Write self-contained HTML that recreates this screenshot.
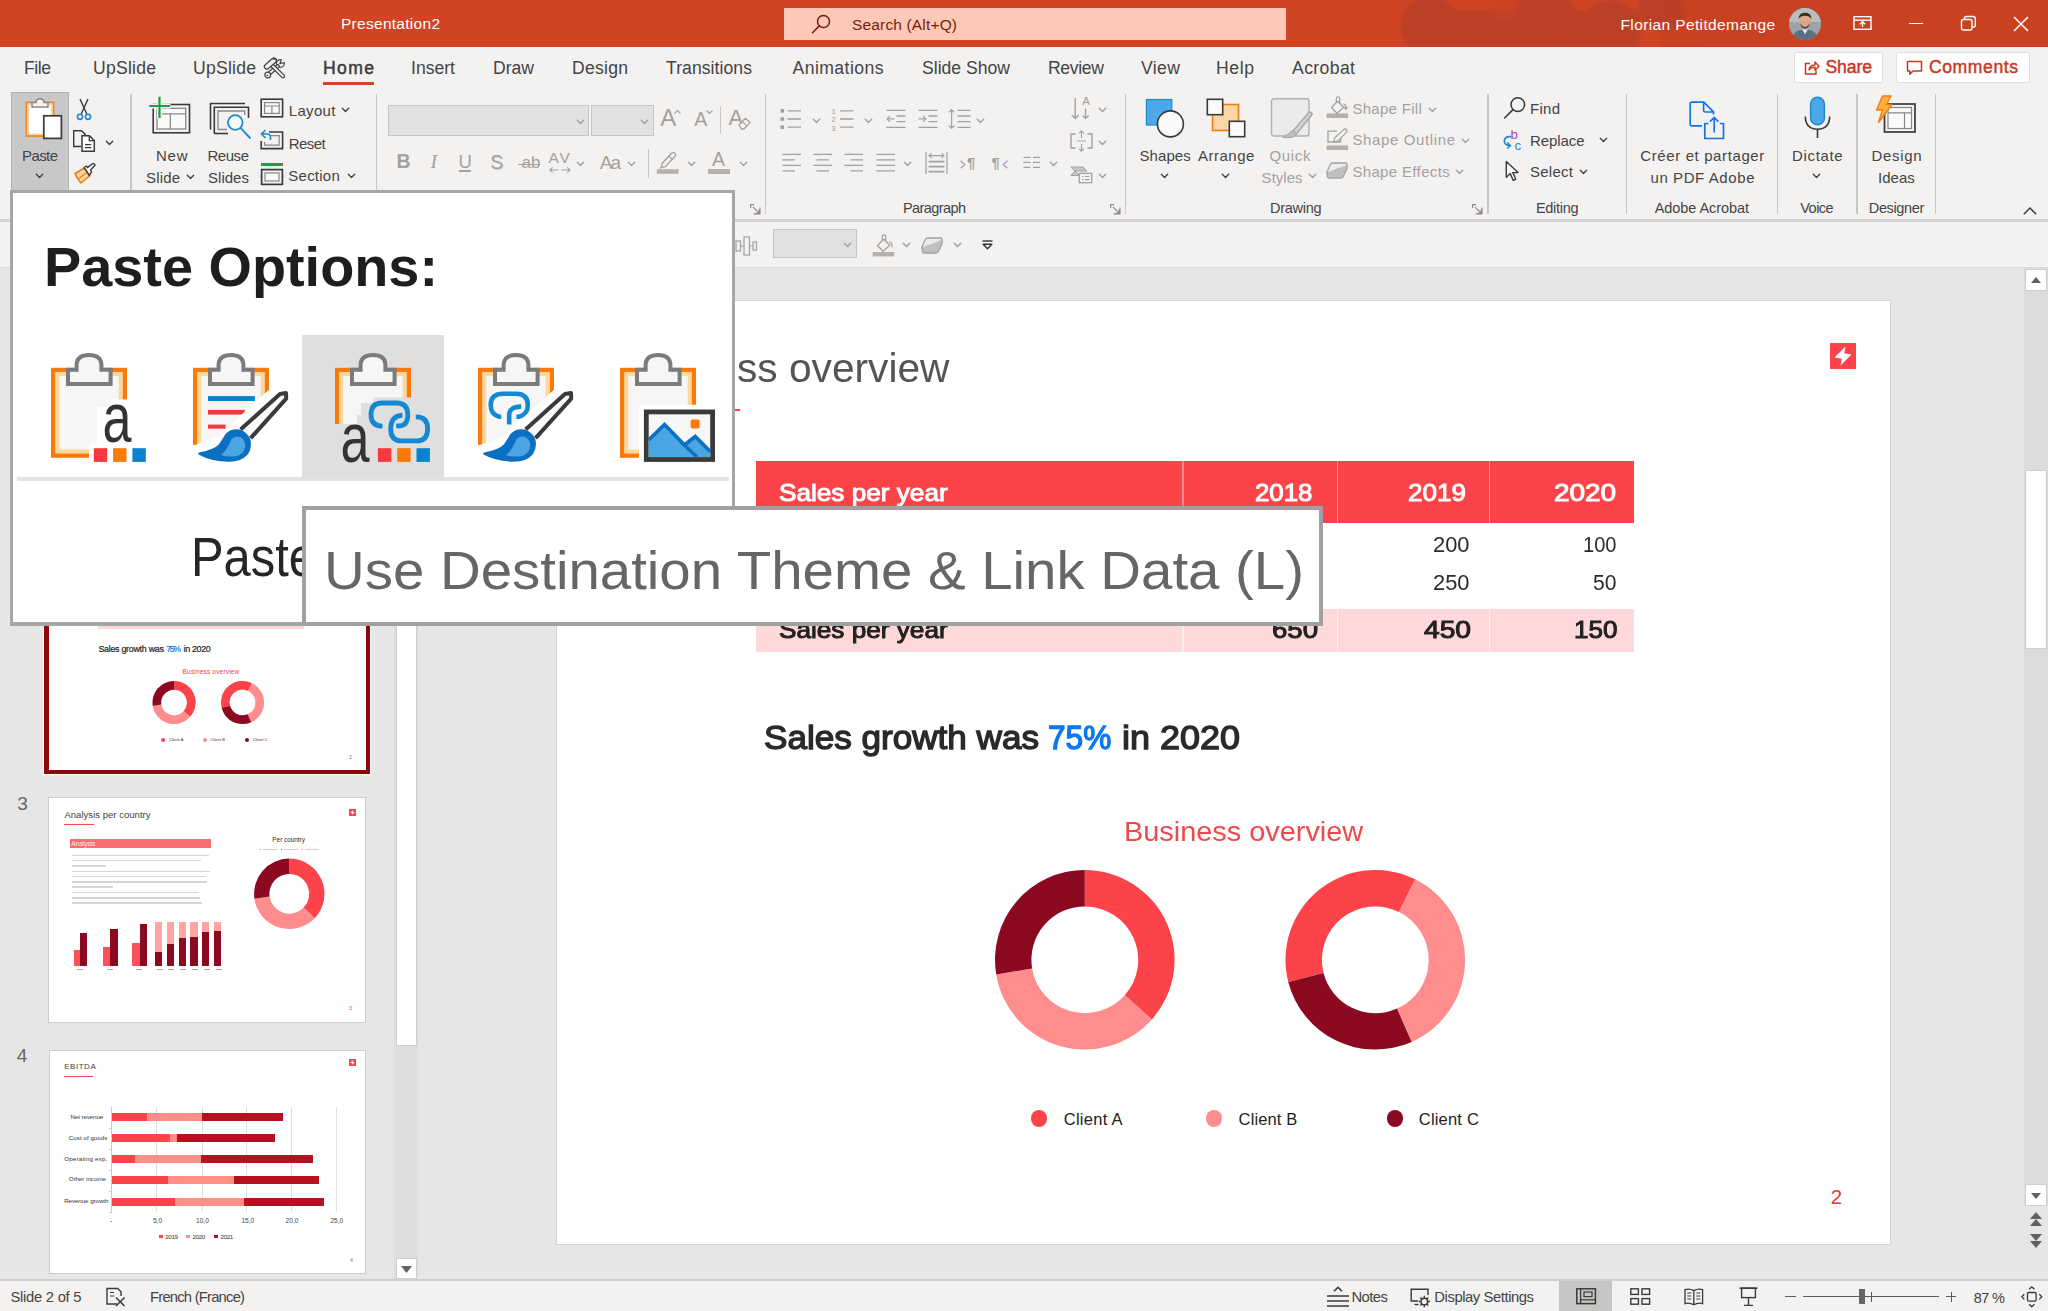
<!DOCTYPE html>
<html lang="en"><head><meta charset="utf-8"><title>PowerPoint - Paste Options</title>
<style>
html,body{margin:0;padding:0;}
body{width:2048px;height:1311px;overflow:hidden;background:#e6e6e6;position:relative;font-family:"Liberation Sans",sans-serif;}
body>div,body>svg,body>span{position:absolute;display:block;}
.t{white-space:nowrap;line-height:1;}
svg{overflow:visible;}
</style></head>
<body>
<div style="left:0px;top:0px;width:2048px;height:47px;background:#d14524;"></div>
<svg style="left:1290px;top:0px;" width="758" height="47" viewBox="0 0 758 47"><defs><clipPath id="tbc"><rect x="0" y="0" width="758" height="47"/></clipPath></defs><filter id="tbb"><feGaussianBlur stdDeviation="1.6"/></filter><g clip-path="url(#tbc)"><g filter="url(#tbb)"><rect x="370" y="0" width="388" height="47" fill="#c6401f" opacity=".75"/><g fill="#b84026" opacity=".8"><circle cx="140" cy="26" r="30"/><circle cx="188" cy="34" r="22"/><circle cx="255" cy="22" r="34"/><circle cx="320" cy="30" r="30"/><circle cx="372" cy="8" r="24"/><rect x="150" y="10" width="200" height="37"/></g><g fill="#c9431f" opacity=".5"><circle cx="215" cy="6" r="14"/><circle cx="395" cy="40" r="16"/></g></g></g></svg>
<div style="left:784px;top:8px;width:502px;height:32px;background:#fdc9b6;"></div>
<div style="left:0px;top:47px;width:2048px;height:173px;background:#f3f2f1;"></div>
<div style="left:0px;top:219px;width:2048px;height:3px;background:#d6d4d2;"></div>
<div style="left:0px;top:222px;width:2048px;height:45px;background:#f3f2f1;"></div>
<div style="left:0px;top:267px;width:2048px;height:1px;background:#dcdad8;"></div>
<div style="left:0px;top:268px;width:2048px;height:1012px;background:#e6e6e6;"></div>
<div style="left:557px;top:301px;width:1333px;height:943px;background:#ffffff;box-shadow:0 0 0 1px #d4d4d4;"></div>
<div style="left:2024px;top:268px;width:24px;height:1012px;background:#dcdcdc;"></div>
<div style="left:2025px;top:269px;width:22px;height:22px;background:#ffffff;box-shadow:0 0 0 1px #cfcfcf inset;"></div>
<div style="left:2025px;top:470px;width:22px;height:179px;background:#ffffff;box-shadow:0 0 0 1px #cfcfcf inset;"></div>
<div style="left:2025px;top:1184px;width:22px;height:22px;background:#ffffff;box-shadow:0 0 0 1px #cfcfcf inset;"></div>
<div style="left:2024px;top:1206px;width:24px;height:74px;background:#e6e6e6;"></div>
<svg style="left:2025px;top:269px;" width="22" height="22" viewBox="0 0 22 22"><path d="M6 14 L11 8 L16 14Z" fill="#606060"/></svg>
<svg style="left:2025px;top:1184px;" width="22" height="22" viewBox="0 0 22 22"><path d="M6 9 L11 15 L16 9Z" fill="#606060"/></svg>
<svg style="left:2025px;top:1210px;" width="22" height="40" viewBox="0 0 22 40"><g fill="#606060"><path d="M5 9 L11 2 L17 9Z"/><path d="M5 16 L11 9 L17 16Z"/><path d="M5 24 L11 31 L17 24Z"/><path d="M5 31 L11 38 L17 31Z"/></g></svg>
<div style="left:394px;top:268px;width:24px;height:1012px;background:#dedede;"></div>
<div style="left:396px;top:268px;width:21px;height:778px;background:#ffffff;box-shadow:0 0 0 1px #cfcfcf inset;"></div>
<div style="left:396px;top:1258.2px;width:21px;height:21px;background:#ffffff;box-shadow:0 0 0 1px #cfcfcf inset;"></div>
<svg style="left:396px;top:1258.7px;" width="21" height="20" viewBox="0 0 21 20"><path d="M5 7 L10.5 14 L16 7Z" fill="#606060"/></svg>
<div style="left:0px;top:1279px;width:2048px;height:2px;background:#d2d0ce;"></div>
<div style="left:0px;top:1281px;width:2048px;height:30px;background:#f3f2f1;"></div>
<span class="t" style="left:341.00px;top:15.58px;font-size:15.5px;color:#ffffff;letter-spacing:0.279px;">Presentation2</span>
<svg style="left:810px;top:13px;" width="22" height="22" viewBox="0 0 22 22"><circle cx="13.5" cy="8.5" r="6" fill="none" stroke="#7a1a0c" stroke-width="1.5"/><path d="M9.3 12.8 L2.5 19.8" stroke="#7a1a0c" stroke-width="1.6" stroke-linecap="round"/></svg>
<span class="t" style="left:852.00px;top:16.98px;font-size:15.5px;color:#7a1a0c;letter-spacing:0.159px;">Search (Alt+Q)</span>
<span class="t" style="left:1620.50px;top:17.38px;font-size:15.5px;color:#ffffff;letter-spacing:0.377px;">Florian Petitdemange</span>
<svg style="left:1789px;top:8px;" width="32" height="32" viewBox="0 0 32 32"><defs><clipPath id="av"><circle cx="16" cy="16" r="16"/></clipPath></defs><g clip-path="url(#av)"><rect width="32" height="32" fill="#9aa3a8"/><rect x="0" y="0" width="32" height="14" fill="#b9bdbf"/><ellipse cx="16" cy="13" rx="6" ry="7" fill="#d9a98a"/><path d="M9.5 11 Q10 4.5 16 4.8 Q22 4.5 22.5 11 Q20 7.5 16 7.8 Q12 7.5 9.5 11Z" fill="#3a2a22"/><path d="M11 15 Q16 23 21 15 Q20 20 16 20.5 Q12 20 11 15Z" fill="#4a352b"/><path d="M3 32 Q4 21.5 16 21.5 Q28 21.5 29 32Z" fill="#5b6f86"/><path d="M13 21.5 L16 26 L19 21.5Z" fill="#e9e9ee"/></g></svg>
<svg style="left:1853px;top:15px;" width="20" height="17" viewBox="0 0 20 17"><rect x="1" y="1.7" width="17" height="12.6" fill="none" stroke="#fff" stroke-width="1.4"/><path d="M1 5.2 H18" stroke="#fff" stroke-width="1.4"/><path d="M9.5 12 V7 M6.8 9.2 L9.5 6.6 L12.2 9.2" fill="none" stroke="#fff" stroke-width="1.3"/></svg>
<div style="left:1909px;top:22.5px;width:14px;height:1.5px;background:#ffffff;"></div>
<svg style="left:1960px;top:15px;" width="18" height="17" viewBox="0 0 18 17"><rect x="1.5" y="4.5" width="10.5" height="10.5" rx="2" fill="none" stroke="#fff" stroke-width="1.4"/><path d="M4.5 4.2 V3.5 Q4.5 1.5 6.5 1.5 H13 Q15.3 1.5 15.3 3.8 V10 Q15.3 12 13.5 12 H12.4" fill="none" stroke="#fff" stroke-width="1.4"/></svg>
<svg style="left:2013px;top:16px;" width="16" height="16" viewBox="0 0 16 16"><path d="M1 1 L15 15 M15 1 L1 15" stroke="#fff" stroke-width="1.5"/></svg>
<span class="t" style="left:24.00px;top:60.40px;font-size:17.6px;color:#444444;letter-spacing:-0.453px;">File</span>
<span class="t" style="left:93.00px;top:60.40px;font-size:17.6px;color:#444444;letter-spacing:0.229px;">UpSlide</span>
<span class="t" style="left:193.00px;top:60.40px;font-size:17.6px;color:#444444;letter-spacing:0.229px;">UpSlide</span>
<span class="t" style="left:411.00px;top:60.40px;font-size:17.6px;color:#444444;">Insert</span>
<span class="t" style="left:493.00px;top:60.40px;font-size:17.6px;color:#444444;letter-spacing:-0.021px;">Draw</span>
<span class="t" style="left:572.00px;top:60.40px;font-size:17.6px;color:#444444;letter-spacing:0.244px;">Design</span>
<span class="t" style="left:666.00px;top:60.40px;font-size:17.6px;color:#444444;letter-spacing:0.059px;">Transitions</span>
<span class="t" style="left:792.50px;top:60.40px;font-size:17.6px;color:#444444;letter-spacing:0.439px;">Animations</span>
<span class="t" style="left:922.00px;top:60.40px;font-size:17.6px;color:#444444;">Slide Show</span>
<span class="t" style="left:1048.00px;top:60.40px;font-size:17.6px;color:#444444;letter-spacing:-0.338px;">Review</span>
<span class="t" style="left:1141.00px;top:60.40px;font-size:17.6px;color:#444444;letter-spacing:0.391px;">View</span>
<span class="t" style="left:1216.00px;top:60.40px;font-size:17.6px;color:#444444;letter-spacing:0.604px;">Help</span>
<span class="t" style="left:1292.00px;top:60.40px;font-size:17.6px;color:#444444;letter-spacing:0.393px;">Acrobat</span>
<span class="t" style="left:323.00px;top:60.40px;font-size:17.6px;color:#3b3a39;letter-spacing:1.354px;-webkit-text-stroke:0.45px #3b3a39;">Home</span>
<div style="left:323px;top:81.5px;width:51px;height:3.5px;background:#d14524;"></div>
<svg style="left:264px;top:58px;" width="22" height="21" viewBox="0 0 22 21"><circle cx="16.4" cy="5.4" r="3.9" fill="#f3f2f1" stroke="#444" stroke-width="1.25"/><path d="M16.6 5.2 L21 0.6" stroke="#f3f2f1" stroke-width="3.2"/><path d="M17.3 2 L15.9 5.8 L19.8 4.6" fill="none" stroke="#444" stroke-width="1.2" stroke-linejoin="round"/><path d="M13.6 8.4 L3.9 16.6" stroke="#444" stroke-width="4.4" stroke-linecap="round"/><path d="M13.6 8.4 L3.9 16.6" stroke="#f3f2f1" stroke-width="1.9000000000000004" stroke-linecap="round"/><circle cx="3.7" cy="17" r="2.9" fill="#f3f2f1" stroke="#444" stroke-width="1.25"/><circle cx="3.3" cy="17.4" r="0.8" fill="#444"/><path d="M8.2 7.6 L19 18.2" stroke="#444" stroke-width="4.4" stroke-linecap="round"/><path d="M8.2 7.6 L19 18.2" stroke="#f3f2f1" stroke-width="1.9000000000000004" stroke-linecap="round"/><path d="M2.8 8.6 L9.8 2.6" stroke="#444" stroke-width="6.2" stroke-linecap="round"/><path d="M2.8 8.6 L9.8 2.6" stroke="#f3f2f1" stroke-width="3.7" stroke-linecap="round"/><path d="M9 1.6 Q11.5 0.2 13 1.8" fill="none" stroke="#444" stroke-width="1.2"/></svg>
<div style="left:1794px;top:52px;width:89px;height:31px;background:#ffffff;box-shadow:0 0 0 1px #e1dfdd inset;border-radius:2px;"></div>
<div style="left:1896px;top:52px;width:134px;height:31px;background:#ffffff;box-shadow:0 0 0 1px #e1dfdd inset;border-radius:2px;"></div>
<svg style="left:1803px;top:59px;" width="17" height="17" viewBox="0 0 17 17"><path d="M7 4.5 H2.5 V15 H13 V11.5" fill="none" stroke="#c8391f" stroke-width="1.5"/><path d="M6 11 Q6.5 6 12 6 V3 L16 7.2 L12 11.2 V8.3 Q8 8 6 11Z" fill="none" stroke="#c8391f" stroke-width="1.4" stroke-linejoin="round"/></svg>
<span class="t" style="left:1825.50px;top:59.30px;font-size:17.6px;color:#c8391f;letter-spacing:-0.113px;-webkit-text-stroke:0.45px #c8391f;">Share</span>
<svg style="left:1906px;top:60px;" width="17" height="16" viewBox="0 0 17 16"><path d="M1.5 1.5 H15.5 V11 H7 L3.8 14.2 V11 H1.5Z" fill="none" stroke="#c8391f" stroke-width="1.5" stroke-linejoin="round"/></svg>
<span class="t" style="left:1929.00px;top:59.30px;font-size:17.6px;color:#c8391f;letter-spacing:0.562px;-webkit-text-stroke:0.45px #c8391f;">Comments</span>
<div style="left:130.3px;top:93.5px;width:1.3px;height:120.5px;background:#c8c6c4;"></div>
<div style="left:375.6px;top:93.5px;width:1.3px;height:120.5px;background:#c8c6c4;"></div>
<div style="left:764.6px;top:93.5px;width:1.3px;height:120.5px;background:#c8c6c4;"></div>
<div style="left:1124.8px;top:93.5px;width:1.3px;height:120.5px;background:#c8c6c4;"></div>
<div style="left:1487.3px;top:93.5px;width:1.3px;height:120.5px;background:#c8c6c4;"></div>
<div style="left:1625.7px;top:93.5px;width:1.3px;height:120.5px;background:#c8c6c4;"></div>
<div style="left:1777px;top:93.5px;width:1.3px;height:120.5px;background:#c8c6c4;"></div>
<div style="left:1856.3px;top:93.5px;width:1.3px;height:120.5px;background:#c8c6c4;"></div>
<div style="left:1935px;top:93.5px;width:1.3px;height:120.5px;background:#c8c6c4;"></div>
<div style="left:11px;top:92px;width:58px;height:100px;background:#c8c8c8;box-shadow:0 0 0 1px #b4b2b0 inset;"></div>
<svg style="left:24px;top:96px;" width="40" height="45" viewBox="0 0 40 45"><rect x="2.5" y="6.5" width="27" height="33.5" fill="#fdfdfd" stroke="#f08a24" stroke-width="2"/><rect x="4.3" y="8.3" width="23.4" height="30" fill="none" stroke="#fbd6a3" stroke-width="1.6"/><path d="M8 11 V6.5 H12 Q12.3 2.7 16 2.7 Q19.7 2.7 20 6.5 H24 V11Z" fill="#f3f2f1" stroke="#8a8886" stroke-width="1.5"/><rect x="19.8" y="19.8" width="17.6" height="22.6" fill="#fdfdfd" stroke="#3b3a39" stroke-width="1.7"/></svg>
<span class="t" style="left:22.00px;top:147.70px;font-size:15px;color:#444444;letter-spacing:-0.590px;">Paste</span>
<svg style="left:36px;top:174.3px;" width="7" height="4" viewBox="0 0 7 4"><path d="M0.3 0.3 L3.5 3.6 L6.7 0.3" fill="none" stroke="#444444" stroke-width="1.4" stroke-linecap="round" stroke-linejoin="round"/></svg>
<svg style="left:76px;top:97px;" width="16" height="24" viewBox="0 0 16 24"><path d="M4 2 L10.8 17 M12 2 L5.2 17" stroke="#3b3a39" stroke-width="1.4" fill="none"/><circle cx="4" cy="19.8" r="2.6" fill="none" stroke="#1e8bcd" stroke-width="1.6"/><circle cx="12" cy="19.8" r="2.6" fill="none" stroke="#1e8bcd" stroke-width="1.6"/></svg>
<svg style="left:72px;top:129px;" width="24" height="24" viewBox="0 0 24 24"><path d="M9 17.5 H1.7 V1.7 H9.5 L13.2 5.4 V6" fill="none" stroke="#3b3a39" stroke-width="1.4"/><path d="M10 6.7 H17.5 L22.3 11.5 V22.3 H10Z" fill="#fdfdfd" stroke="#3b3a39" stroke-width="1.5"/><path d="M17.3 6.9 V11.7 H22" fill="none" stroke="#3b3a39" stroke-width="1.3"/><path d="M13 15.7 H19.3 M13 18.7 H19.3" stroke="#3b3a39" stroke-width="1.3"/></svg>
<svg style="left:105.5px;top:140.5px;" width="7" height="4" viewBox="0 0 7 4"><path d="M0.3 0.3 L3.5 3.6 L6.7 0.3" fill="none" stroke="#444444" stroke-width="1.4" stroke-linecap="round" stroke-linejoin="round"/></svg>
<svg style="left:73px;top:162px;" width="24" height="22" viewBox="0 0 24 22"><path d="M2 11.5 L11.5 6 L16.5 14 L8 21 Q4 17 2 11.5Z" fill="#fbd6a3" stroke="#f07d13" stroke-width="1.6" stroke-linejoin="round"/><path d="M6 16.5 L13 11" stroke="#f07d13" stroke-width="1.2"/><path d="M11 5.5 L13.5 4 L14.5 5.6 L19.5 1.8 Q21.5 1.2 22 3.2 L17.5 8 L18.5 9.7 L16.5 13.5Z" fill="#fdfdfd" stroke="#3b3a39" stroke-width="1.4" stroke-linejoin="round"/></svg>
<svg style="left:148px;top:95px;" width="44" height="40" viewBox="0 0 44 40"><rect x="5.2" y="9.5" width="36.3" height="28.3" fill="none" stroke="#3b3a39" stroke-width="1.6"/><rect x="9" y="13.3" width="28.7" height="20.7" fill="#fafafa" stroke="#8a8886" stroke-width="1.3"/><path d="M9 18.8 H37.7 M22.3 18.8 V34" stroke="#8a8886" stroke-width="1.3"/><path d="M11.5 1.5 V23.5 M1 11 H22.5" stroke="#f3f2f1" stroke-width="5"/><path d="M11.5 1.7 V23 M1.2 11 H22.2" stroke="#1e9e4a" stroke-width="2.2"/></svg>
<span class="t" style="left:156.00px;top:147.70px;font-size:15px;color:#444444;letter-spacing:0.742px;">New</span>
<span class="t" style="left:146.00px;top:169.50px;font-size:15px;color:#444444;letter-spacing:0.160px;">Slide</span>
<svg style="left:187px;top:174.5px;" width="7" height="4" viewBox="0 0 7 4"><path d="M0.3 0.3 L3.5 3.6 L6.7 0.3" fill="none" stroke="#444444" stroke-width="1.4" stroke-linecap="round" stroke-linejoin="round"/></svg>
<svg style="left:209px;top:102px;" width="43" height="40" viewBox="0 0 43 40"><path d="M1.5 27.5 V1.5 H36" fill="none" stroke="#3b3a39" stroke-width="1.6"/><path d="M5.3 31.5 V5.3 H39.5 V16" fill="none" stroke="#3b3a39" stroke-width="1.6"/><path d="M5.3 31.5 H19" fill="none" stroke="#3b3a39" stroke-width="1.6"/><path d="M9 27.5 V9 H35.7 V13 M9 27.5 H18" fill="none" stroke="#8a8886" stroke-width="1.3"/><circle cx="26.3" cy="20.5" r="7.3" fill="#fafafa" stroke="#1e8bcd" stroke-width="1.8"/><path d="M31.6 25.8 L41.5 36.5" stroke="#1e8bcd" stroke-width="1.9"/></svg>
<span class="t" style="left:207.50px;top:147.70px;font-size:15px;color:#444444;letter-spacing:-0.465px;">Reuse</span>
<span class="t" style="left:208.00px;top:169.50px;font-size:15px;color:#444444;letter-spacing:0.028px;">Slides</span>
<svg style="left:260px;top:97.5px;" width="24" height="20" viewBox="0 0 24 20"><rect x="1.2" y="1.2" width="21.4" height="17.6" fill="none" stroke="#3b3a39" stroke-width="1.6"/><rect x="4.6" y="4.6" width="14.6" height="10.8" fill="#fafafa" stroke="#8a8886" stroke-width="1.2"/><path d="M4.6 8 H19.2 M11.9 8 V15.4" stroke="#8a8886" stroke-width="1.2"/></svg>
<span class="t" style="left:288.70px;top:102.80px;font-size:15px;color:#444444;letter-spacing:0.351px;">Layout</span>
<svg style="left:341.8px;top:108.3px;" width="7" height="4" viewBox="0 0 7 4"><path d="M0.3 0.3 L3.5 3.6 L6.7 0.3" fill="none" stroke="#444444" stroke-width="1.4" stroke-linecap="round" stroke-linejoin="round"/></svg>
<svg style="left:260px;top:129px;" width="24" height="21" viewBox="0 0 24 21"><path d="M9 3 H22.6 V19.6 H1.2 V12" fill="none" stroke="#3b3a39" stroke-width="1.6"/><path d="M11 6.6 H19.2 V16.2 H4.6 V13" fill="none" stroke="#8a8886" stroke-width="1.2"/><path d="M5.5 1 L1.5 5 L5.5 9 M1.8 5 H7 Q10.5 5 10.5 8.5 V11" fill="none" stroke="#1e8bcd" stroke-width="1.7"/></svg>
<span class="t" style="left:288.70px;top:135.50px;font-size:15px;color:#444444;letter-spacing:-0.547px;">Reset</span>
<svg style="left:260px;top:162px;" width="24" height="24" viewBox="0 0 24 24"><rect x="1" y="1" width="22" height="3" fill="#1e9e4a"/><rect x="1.6" y="7.6" width="20.8" height="14.8" fill="none" stroke="#3b3a39" stroke-width="1.7"/><rect x="5" y="11" width="14" height="8" fill="#fafafa" stroke="#8a8886" stroke-width="1.2"/></svg>
<span class="t" style="left:288.30px;top:168.30px;font-size:15px;color:#444444;letter-spacing:0.242px;">Section</span>
<svg style="left:348px;top:174px;" width="7" height="4" viewBox="0 0 7 4"><path d="M0.3 0.3 L3.5 3.6 L6.7 0.3" fill="none" stroke="#444444" stroke-width="1.4" stroke-linecap="round" stroke-linejoin="round"/></svg>
<div style="left:388px;top:105px;width:200.5px;height:31px;background:#e3e1df;box-shadow:0 0 0 1px #c8c6c4 inset;"></div>
<div style="left:590.7px;top:105px;width:63.3px;height:31px;background:#e3e1df;box-shadow:0 0 0 1px #c8c6c4 inset;"></div>
<svg style="left:576.5px;top:119.5px;" width="7" height="4" viewBox="0 0 7 4"><path d="M0.3 0.3 L3.5 3.6 L6.7 0.3" fill="none" stroke="#a3a19f" stroke-width="1.4" stroke-linecap="round" stroke-linejoin="round"/></svg>
<svg style="left:641px;top:119.5px;" width="7" height="4" viewBox="0 0 7 4"><path d="M0.3 0.3 L3.5 3.6 L6.7 0.3" fill="none" stroke="#a3a19f" stroke-width="1.4" stroke-linecap="round" stroke-linejoin="round"/></svg>
<span class="t" style="left:660.30px;top:106.28px;font-size:24px;color:#a3a19f;">A</span>
<svg style="left:674px;top:110px;" width="7" height="4" viewBox="0 0 7 4"><path d="M0.5 3.6 L3.5 0.6 L6.5 3.6" fill="none" stroke="#a3a19f" stroke-width="1.2"/></svg>
<span class="t" style="left:694.30px;top:110.09px;font-size:19.5px;color:#a3a19f;">A</span>
<svg style="left:705.5px;top:110px;" width="7" height="4" viewBox="0 0 7 4"><path d="M0.5 0.5 L3.5 3.5 L6.5 0.5" fill="none" stroke="#a3a19f" stroke-width="1.2"/></svg>
<div style="left:720.2px;top:106px;width:1.2px;height:28px;background:#c8c6c4;"></div>
<span class="t" style="left:728.50px;top:106.88px;font-size:22px;color:#a3a19f;">A</span>
<svg style="left:738px;top:117px;" width="13" height="13" viewBox="0 0 13 13"><path d="M1 8 L7.5 1.2 L12 5.6 L6 12 H3.5Z" fill="#f3f2f1" stroke="#a3a19f" stroke-width="1.3" stroke-linejoin="round"/><path d="M4.5 4.8 L9 9.2" stroke="#a3a19f" stroke-width="1.1"/></svg>
<span class="t" style="left:396.50px;top:152.49px;font-size:19.5px;color:#a3a19f;font-weight:700;">B</span>
<span class="t" style="left:430.50px;top:152.49px;font-size:19.5px;color:#a3a19f;font-style:italic;font-family:'Liberation Serif', serif;">I</span>
<span class="t" style="left:458.50px;top:152.84px;font-size:18.5px;color:#a3a19f;">U</span>
<div style="left:458.5px;top:170.4px;width:12.5px;height:1.3px;background:#a3a19f;"></div>
<span class="t" style="left:490.30px;top:152.69px;font-size:19.5px;color:#a3a19f;text-shadow:1px 1px 0 #d6d4d2;">S</span>
<span class="t" style="left:521.50px;top:154.21px;font-size:17px;color:#a3a19f;">ab</span>
<div style="left:517.5px;top:163.6px;width:22px;height:1.3px;background:#a3a19f;"></div>
<span class="t" style="left:548.50px;top:150.18px;font-size:15.5px;color:#a3a19f;letter-spacing:1.769px;">AV</span>
<svg style="left:548.5px;top:165.5px;" width="22" height="8" viewBox="0 0 22 8"><path d="M0.8 4 H9.3 M3.6 1.3 L0.8 4 L3.6 6.7 M12.3 4 H21 M18.2 1.3 L21 4 L18.2 6.7" fill="none" stroke="#a3a19f" stroke-width="1.1"/></svg>
<svg style="left:577.3px;top:162.3px;" width="7" height="4" viewBox="0 0 7 4"><path d="M0.3 0.3 L3.5 3.6 L6.7 0.3" fill="none" stroke="#a3a19f" stroke-width="1.4" stroke-linecap="round" stroke-linejoin="round"/></svg>
<span class="t" style="left:599.70px;top:152.92px;font-size:19px;color:#a3a19f;letter-spacing:-1.750px;">Aa</span>
<svg style="left:628px;top:162.3px;" width="7" height="4" viewBox="0 0 7 4"><path d="M0.3 0.3 L3.5 3.6 L6.7 0.3" fill="none" stroke="#a3a19f" stroke-width="1.4" stroke-linecap="round" stroke-linejoin="round"/></svg>
<div style="left:648px;top:149px;width:1.2px;height:28.6px;background:#c8c6c4;"></div>
<svg style="left:656px;top:151px;" width="24" height="24" viewBox="0 0 24 24"><path d="M6.2 12.3 L15.7 2 Q17.5 0.7 19 2.3 Q20.3 3.8 19 5.3 L9.5 15.6 L5.2 16.3Z" fill="none" stroke="#a3a19f" stroke-width="1.3" stroke-linejoin="round"/><path d="M12.8 5 L16.2 8.3" stroke="#a3a19f" stroke-width="1.1"/><path d="M5.2 16.3 L3 17.6 L6 17.2Z" fill="#a3a19f"/><rect x="0.8" y="18.2" width="21.8" height="4.6" fill="#b3b0ad"/></svg>
<svg style="left:688px;top:162.3px;" width="7" height="4" viewBox="0 0 7 4"><path d="M0.3 0.3 L3.5 3.6 L6.7 0.3" fill="none" stroke="#a3a19f" stroke-width="1.4" stroke-linecap="round" stroke-linejoin="round"/></svg>
<span class="t" style="left:712.00px;top:150.29px;font-size:19.5px;color:#a3a19f;">A</span>
<div style="left:708.2px;top:169.2px;width:21.6px;height:4.6px;background:#b3b0ad;"></div>
<svg style="left:740.3px;top:162.3px;" width="7" height="4" viewBox="0 0 7 4"><path d="M0.3 0.3 L3.5 3.6 L6.7 0.3" fill="none" stroke="#a3a19f" stroke-width="1.4" stroke-linecap="round" stroke-linejoin="round"/></svg>
<svg style="left:750px;top:203.5px;" width="11" height="11" viewBox="0 0 11 11"><path d="M0.6 4 V0.6 H4 M10 3.5 V10 H3.5 M3.2 3.2 L9 9 M9.2 5.2 V9.2 H5.2" fill="none" stroke="#8a8886" stroke-width="1.1"/></svg>
<svg style="left:780px;top:108px;" width="22" height="22" viewBox="0 0 22 22"><rect x="0.5" y="1" width="3.6" height="3.6" fill="#a3a19f"/><rect x="0.5" y="9.2" width="3.6" height="3.6" fill="#a3a19f"/><rect x="0.5" y="17.4" width="3.6" height="3.6" fill="#a3a19f"/><path d="M7.5 2.8 H21 M7.5 11 H21 M7.5 19.2 H21" stroke="#a3a19f" stroke-width="1.3" fill="none"/></svg>
<svg style="left:812.7px;top:119px;" width="7" height="4" viewBox="0 0 7 4"><path d="M0.3 0.3 L3.5 3.6 L6.7 0.3" fill="none" stroke="#a3a19f" stroke-width="1.4" stroke-linecap="round" stroke-linejoin="round"/></svg>
<svg style="left:831px;top:107px;" width="23" height="24" viewBox="0 0 23 24"><path d="M9 3.8 H22.5 M9 12 H22.5 M9 20.2 H22.5" stroke="#a3a19f" stroke-width="1.3" fill="none"/></svg>
<span class="t" style="left:831.50px;top:107.95px;font-size:7.5px;color:#a3a19f;">1</span>
<span class="t" style="left:831.50px;top:116.25px;font-size:7.5px;color:#a3a19f;">2</span>
<span class="t" style="left:831.50px;top:124.55px;font-size:7.5px;color:#a3a19f;">3</span>
<svg style="left:864.5px;top:119px;" width="7" height="4" viewBox="0 0 7 4"><path d="M0.3 0.3 L3.5 3.6 L6.7 0.3" fill="none" stroke="#a3a19f" stroke-width="1.4" stroke-linecap="round" stroke-linejoin="round"/></svg>
<svg style="left:886px;top:108px;" width="20" height="22" viewBox="0 0 20 22"><path d="M0.5 2.3 H19.5 M10.5 8 H19.5 M10.5 13.7 H19.5 M0.5 19.4 H19.5 M1.2 10.9 H8.5" stroke="#a3a19f" stroke-width="1.3" fill="none"/><path d="M4 8 L1.2 10.9 L4 13.8" fill="none" stroke="#a3a19f" stroke-width="1.2"/></svg>
<svg style="left:917.5px;top:108px;" width="20" height="22" viewBox="0 0 20 22"><path d="M0.5 2.3 H19.5 M10.5 8 H19.5 M10.5 13.7 H19.5 M0.5 19.4 H19.5 M0.5 10.9 H7.8" stroke="#a3a19f" stroke-width="1.3" fill="none"/><path d="M5 8 L7.8 10.9 L5 13.8" fill="none" stroke="#a3a19f" stroke-width="1.2"/></svg>
<svg style="left:948px;top:108px;" width="23" height="22" viewBox="0 0 23 22"><path d="M9.5 2.3 H22.5 M9.5 8 H22.5 M9.5 13.7 H22.5 M9.5 19.4 H22.5" stroke="#a3a19f" stroke-width="1.3" fill="none"/><path d="M3.6 1.5 V20.3 M0.8 4.3 L3.6 1.5 L6.4 4.3 M0.8 17.5 L3.6 20.3 L6.4 17.5" fill="none" stroke="#a3a19f" stroke-width="1.2"/></svg>
<svg style="left:977px;top:119px;" width="7" height="4" viewBox="0 0 7 4"><path d="M0.3 0.3 L3.5 3.6 L6.7 0.3" fill="none" stroke="#a3a19f" stroke-width="1.4" stroke-linecap="round" stroke-linejoin="round"/></svg>
<svg style="left:782px;top:153px;" width="20" height="19" viewBox="0 0 20 19"><path d="M0.5 1.3 H19 M0.5 6.8 H13 M0.5 12.3 H19 M0.5 17.8 H13" stroke="#a3a19f" stroke-width="1.3" fill="none"/></svg>
<svg style="left:813px;top:153px;" width="20" height="19" viewBox="0 0 20 19"><path d="M0.5 1.3 H19 M3.5 6.8 H16 M0.5 12.3 H19 M3.5 17.8 H16" stroke="#a3a19f" stroke-width="1.3" fill="none"/></svg>
<svg style="left:844.3px;top:153px;" width="20" height="19" viewBox="0 0 20 19"><path d="M0.5 1.3 H19 M6.5 6.8 H19 M0.5 12.3 H19 M6.5 17.8 H19" stroke="#a3a19f" stroke-width="1.3" fill="none"/></svg>
<svg style="left:875.6px;top:153px;" width="20" height="19" viewBox="0 0 20 19"><path d="M0.5 1.3 H19 M0.5 6.8 H19 M0.5 12.3 H19 M0.5 17.8 H19" stroke="#a3a19f" stroke-width="1.3" fill="none"/></svg>
<svg style="left:903.5px;top:162.3px;" width="7" height="4" viewBox="0 0 7 4"><path d="M0.3 0.3 L3.5 3.6 L6.7 0.3" fill="none" stroke="#a3a19f" stroke-width="1.4" stroke-linecap="round" stroke-linejoin="round"/></svg>
<svg style="left:925px;top:151px;" width="23" height="24" viewBox="0 0 23 24"><path d="M1 1 V23 M22 1 V23" stroke="#a3a19f" stroke-width="1.2"/><path d="M3.6 10.6 H19.4 M3.6 15.6 H19.4 M3.6 20.6 H19.4" stroke="#a3a19f" stroke-width="1.6" fill="none"/><path d="M4 4.6 H19 M6.6 2.2 L4 4.6 L6.6 7 M16.4 2.2 L19 4.6 L16.4 7" fill="none" stroke="#a3a19f" stroke-width="1.1"/></svg>
<span class="t" style="left:967.00px;top:155.30px;font-size:15px;color:#a3a19f;font-weight:700;">¶</span>
<svg style="left:960px;top:159.5px;" width="6" height="9" viewBox="0 0 6 9"><path d="M0.6 0.8 L4.8 4.5 L0.6 8.2" fill="none" stroke="#a3a19f" stroke-width="1.2"/></svg>
<span class="t" style="left:991.50px;top:155.30px;font-size:15px;color:#a3a19f;font-weight:700;">¶</span>
<svg style="left:1002px;top:159.5px;" width="6" height="9" viewBox="0 0 6 9"><path d="M5.4 0.8 L1.2 4.5 L5.4 8.2" fill="none" stroke="#a3a19f" stroke-width="1.2"/></svg>
<svg style="left:1023px;top:156px;" width="18" height="14" viewBox="0 0 18 14"><path d="M0.5 1.3 H7.5 M10 1.3 H17 M0.5 6.3 H7.5 M10 6.3 H17 M0.5 11.3 H7.5 M10 11.3 H17" stroke="#a3a19f" stroke-width="1.3" fill="none"/></svg>
<svg style="left:1049.7px;top:162.3px;" width="7" height="4" viewBox="0 0 7 4"><path d="M0.3 0.3 L3.5 3.6 L6.7 0.3" fill="none" stroke="#a3a19f" stroke-width="1.4" stroke-linecap="round" stroke-linejoin="round"/></svg>
<svg style="left:1071px;top:97px;" width="21" height="24" viewBox="0 0 21 24"><path d="M4.2 1 V21.5 M0.8 18 L4.2 21.5 L7.6 18 M14.6 11.5 V21.5 M11.6 18.5 L14.6 21.5 L17.6 18.5" fill="none" stroke="#a3a19f" stroke-width="1.4"/></svg>
<span class="t" style="left:1082.20px;top:96.47px;font-size:11.5px;color:#a3a19f;">A</span>
<svg style="left:1099px;top:107.8px;" width="7" height="4" viewBox="0 0 7 4"><path d="M0.3 0.3 L3.5 3.6 L6.7 0.3" fill="none" stroke="#a3a19f" stroke-width="1.4" stroke-linecap="round" stroke-linejoin="round"/></svg>
<svg style="left:1069.5px;top:129.5px;" width="23" height="22" viewBox="0 0 23 22"><path d="M5.5 4 H1 V18 H5.5 M17.5 4 H22 V18 H17.5" fill="none" stroke="#a3a19f" stroke-width="1.4"/><path d="M11.5 0.8 V8 M9 3.3 L11.5 0.8 L14 3.3 M11.5 21.2 V14 M9 18.7 L11.5 21.2 L14 18.7 M7 11 H16" fill="none" stroke="#a3a19f" stroke-width="1.1"/></svg>
<svg style="left:1099px;top:140.5px;" width="7" height="4" viewBox="0 0 7 4"><path d="M0.3 0.3 L3.5 3.6 L6.7 0.3" fill="none" stroke="#a3a19f" stroke-width="1.4" stroke-linecap="round" stroke-linejoin="round"/></svg>
<svg style="left:1070px;top:165.5px;" width="23" height="18" viewBox="0 0 23 18"><path d="M0.8 1 H13 L17 5 H5 L9.5 9.5 H1 L5 5Z" fill="#c8c6c4" stroke="#a3a19f" stroke-width="1" stroke-linejoin="round"/><rect x="9.3" y="7.3" width="12.4" height="9.4" fill="#f3f2f1" stroke="#a3a19f" stroke-width="1.3"/><path d="M12 10.5 H13.5 M15 10.5 H19.3 M12 13.6 H13.5 M15 13.6 H19.3" stroke="#a3a19f" stroke-width="1.2"/></svg>
<svg style="left:1099px;top:173.5px;" width="7" height="4" viewBox="0 0 7 4"><path d="M0.3 0.3 L3.5 3.6 L6.7 0.3" fill="none" stroke="#a3a19f" stroke-width="1.4" stroke-linecap="round" stroke-linejoin="round"/></svg>
<span class="t" style="left:903.00px;top:200.53px;font-size:14.5px;color:#444444;letter-spacing:-0.590px;">Paragraph</span>
<svg style="left:1110px;top:203.5px;" width="11" height="11" viewBox="0 0 11 11"><path d="M0.6 4 V0.6 H4 M10 3.5 V10 H3.5 M3.2 3.2 L9 9 M9.2 5.2 V9.2 H5.2" fill="none" stroke="#8a8886" stroke-width="1.1"/></svg>
<svg style="left:1145px;top:97.5px;" width="42" height="42" viewBox="0 0 42 42"><rect x="1.4" y="1.5" width="25.4" height="25.5" fill="#4aa9e8" stroke="#1e8bcd" stroke-width="1.2"/><circle cx="25.4" cy="25.9" r="13" fill="#fafafa" stroke="#3b3a39" stroke-width="1.6"/></svg>
<span class="t" style="left:1139.50px;top:147.50px;font-size:15px;color:#444444;letter-spacing:0.065px;">Shapes</span>
<svg style="left:1161px;top:173.8px;" width="7" height="4" viewBox="0 0 7 4"><path d="M0.3 0.3 L3.5 3.6 L6.7 0.3" fill="none" stroke="#444444" stroke-width="1.4" stroke-linecap="round" stroke-linejoin="round"/></svg>
<svg style="left:1206px;top:97.5px;" width="41" height="41" viewBox="0 0 41 41"><rect x="6.5" y="6.5" width="26" height="26" fill="#fbd6a3" stroke="#f07d13" stroke-width="1.6"/><rect x="1.3" y="1.3" width="15.4" height="15.4" fill="#fafafa" stroke="#3b3a39" stroke-width="1.6"/><rect x="23.3" y="23.3" width="15.4" height="15.4" fill="#fafafa" stroke="#3b3a39" stroke-width="1.6"/></svg>
<span class="t" style="left:1198.00px;top:147.50px;font-size:15px;color:#444444;letter-spacing:0.504px;">Arrange</span>
<svg style="left:1221.7px;top:173.8px;" width="7" height="4" viewBox="0 0 7 4"><path d="M0.3 0.3 L3.5 3.6 L6.7 0.3" fill="none" stroke="#444444" stroke-width="1.4" stroke-linecap="round" stroke-linejoin="round"/></svg>
<svg style="left:1269.5px;top:97px;" width="44" height="44" viewBox="0 0 44 44"><rect x="1.5" y="1.7" width="37.5" height="37.3" rx="2.5" fill="#ebebeb" stroke="#b3b0ad" stroke-width="1.4"/><path d="M41.2 15.2 Q42.8 16.2 41.8 18 L26.5 37 L22.5 34.3 L38.5 15.8 Q40 14.4 41.2 15.2Z" fill="#d2d0ce" stroke="#a3a19f" stroke-width="1.2"/><path d="M22.3 33.5 L26.8 37.2 Q24 42 12.5 40.3 Q18.5 37.5 22.3 33.5Z" fill="#c2c0be" stroke="#a3a19f" stroke-width="1"/></svg>
<span class="t" style="left:1269.40px;top:147.50px;font-size:15px;color:#a3a19f;letter-spacing:0.664px;">Quick</span>
<span class="t" style="left:1261.60px;top:169.50px;font-size:15px;color:#a3a19f;letter-spacing:0.028px;">Styles</span>
<svg style="left:1309.2px;top:174.3px;" width="7" height="4" viewBox="0 0 7 4"><path d="M0.3 0.3 L3.5 3.6 L6.7 0.3" fill="none" stroke="#a3a19f" stroke-width="1.4" stroke-linecap="round" stroke-linejoin="round"/></svg>
<svg style="left:1326px;top:95.5px;" width="23" height="23" viewBox="0 0 23 23"><path d="M5.5 11.5 L11.5 5.2 L17.8 11.3 L11 17.3Z" fill="#f3f2f1" stroke="#a3a19f" stroke-width="1.3" stroke-linejoin="round"/><path d="M10.3 6.2 V2.6 Q10.5 0.9 12 0.9 Q13.6 0.9 13.7 2.6 V7" fill="none" stroke="#a3a19f" stroke-width="1.2"/><path d="M17.5 7.8 Q20.3 8.4 20 13.2 M18.2 11.3 L20 13.4 L21.7 11" fill="none" stroke="#a3a19f" stroke-width="1.2"/><rect x="0.6" y="17.4" width="21.6" height="4.6" fill="#b3b0ad"/></svg>
<span class="t" style="left:1352.40px;top:101.20px;font-size:15px;color:#a3a19f;letter-spacing:0.300px;">Shape Fill</span>
<svg style="left:1428.5px;top:107.6px;" width="7" height="4" viewBox="0 0 7 4"><path d="M0.3 0.3 L3.5 3.6 L6.7 0.3" fill="none" stroke="#a3a19f" stroke-width="1.4" stroke-linecap="round" stroke-linejoin="round"/></svg>
<svg style="left:1326px;top:127.5px;" width="23" height="23" viewBox="0 0 23 23"><path d="M11 3.2 H2 V14 H14.6 V10.5" fill="none" stroke="#a3a19f" stroke-width="1.3"/><path d="M8.6 10 L17.8 1.4 Q19.3 0.4 20.6 1.7 Q21.7 3.1 20.5 4.4 L11.6 13.2 L7.8 13.9Z" fill="#f3f2f1" stroke="#a3a19f" stroke-width="1.2" stroke-linejoin="round"/><rect x="0.6" y="17.4" width="21.6" height="4.6" fill="#b3b0ad"/></svg>
<span class="t" style="left:1352.40px;top:132.40px;font-size:15px;color:#a3a19f;letter-spacing:0.627px;">Shape Outline</span>
<svg style="left:1462px;top:138.7px;" width="7" height="4" viewBox="0 0 7 4"><path d="M0.3 0.3 L3.5 3.6 L6.7 0.3" fill="none" stroke="#a3a19f" stroke-width="1.4" stroke-linecap="round" stroke-linejoin="round"/></svg>
<svg style="left:1326px;top:161.5px;" width="23" height="18" viewBox="0 0 23 18"><path d="M6.5 1 H19 Q21.7 1.2 20.8 3.5 L17.5 10.5 Q16.5 12 14.5 12 H2.5 Q0.2 11.7 1.2 9.5 L4.3 2.6 Q5 1 6.5 1Z" fill="#ebebeb" stroke="#a3a19f" stroke-width="1.3"/><path d="M1.2 10.3 V13.8 Q1.3 16 3.5 16.2 H14.5 Q16.7 16 17.5 14.3 L21 6.6 V3" fill="#c2c0be" stroke="#a3a19f" stroke-width="1.2"/></svg>
<span class="t" style="left:1352.40px;top:163.50px;font-size:15px;color:#a3a19f;letter-spacing:0.348px;">Shape Effects</span>
<svg style="left:1456.2px;top:169.8px;" width="7" height="4" viewBox="0 0 7 4"><path d="M0.3 0.3 L3.5 3.6 L6.7 0.3" fill="none" stroke="#a3a19f" stroke-width="1.4" stroke-linecap="round" stroke-linejoin="round"/></svg>
<span class="t" style="left:1270.00px;top:200.53px;font-size:14.5px;color:#444444;letter-spacing:-0.281px;">Drawing</span>
<svg style="left:1471.5px;top:203.5px;" width="11" height="11" viewBox="0 0 11 11"><path d="M0.6 4 V0.6 H4 M10 3.5 V10 H3.5 M3.2 3.2 L9 9 M9.2 5.2 V9.2 H5.2" fill="none" stroke="#8a8886" stroke-width="1.1"/></svg>
<svg style="left:1503px;top:95.5px;" width="24" height="24" viewBox="0 0 24 24"><circle cx="14.8" cy="8.6" r="6.8" fill="none" stroke="#3b3a39" stroke-width="1.5"/><path d="M10 13.6 L1.6 22" stroke="#3b3a39" stroke-width="1.6" stroke-linecap="round"/></svg>
<span class="t" style="left:1530.00px;top:101.30px;font-size:15px;color:#444444;letter-spacing:0.271px;">Find</span>
<svg style="left:1502px;top:127.5px;" width="24" height="24" viewBox="0 0 24 24"><path d="M9.2 8.7 Q2.3 8.2 2.3 13.2 Q2.5 17.5 8 17.5 M5.3 14.5 L8.3 17.5 L5.3 20.5" fill="none" stroke="#1e8bcd" stroke-width="1.7"/></svg>
<span class="t" style="left:1510.60px;top:127.97px;font-size:13.5px;color:#b146c2;">b</span>
<span class="t" style="left:1514.50px;top:138.87px;font-size:13.5px;color:#1e8bcd;">c</span>
<span class="t" style="left:1530.00px;top:133.10px;font-size:15px;color:#444444;letter-spacing:-0.091px;">Replace</span>
<svg style="left:1600px;top:137.6px;" width="7" height="4" viewBox="0 0 7 4"><path d="M0.3 0.3 L3.5 3.6 L6.7 0.3" fill="none" stroke="#444444" stroke-width="1.4" stroke-linecap="round" stroke-linejoin="round"/></svg>
<svg style="left:1505px;top:159.5px;" width="16" height="22" viewBox="0 0 16 22"><path d="M1.3 1.6 V17.3 L5.2 13.6 L8.2 20.4 L10.8 19.2 L7.8 12.6 H13Z" fill="#fafafa" stroke="#3b3a39" stroke-width="1.4" stroke-linejoin="round"/></svg>
<span class="t" style="left:1530.00px;top:164.30px;font-size:15px;color:#444444;letter-spacing:0.259px;">Select</span>
<svg style="left:1579.5px;top:169.6px;" width="7" height="4" viewBox="0 0 7 4"><path d="M0.3 0.3 L3.5 3.6 L6.7 0.3" fill="none" stroke="#444444" stroke-width="1.4" stroke-linecap="round" stroke-linejoin="round"/></svg>
<span class="t" style="left:1536.00px;top:200.53px;font-size:14.5px;color:#444444;letter-spacing:-0.307px;">Editing</span>
<svg style="left:1688.5px;top:101px;" width="37" height="40" viewBox="0 0 37 40"><path d="M13 24.8 H2.3 Q1.2 24.7 1.2 23.5 V2.5 Q1.3 1.3 2.5 1.2 H14.8 L24.5 10.8 V13.5" fill="none" stroke="#1473e6" stroke-width="1.7" stroke-linejoin="round"/><path d="M14.6 1.5 V9.5 Q14.7 11 16.3 11 H24.2" fill="none" stroke="#1473e6" stroke-width="1.7"/><path d="M19.5 22.5 H15.8 V37.5 H34.5 V22.5 H30.8" fill="none" stroke="#1473e6" stroke-width="1.7" stroke-linejoin="round"/><path d="M25.2 31.5 V16.5 M21 20.6 L25.2 16.4 L29.4 20.6" fill="none" stroke="#1473e6" stroke-width="1.7"/></svg>
<span class="t" style="left:1640.30px;top:148.30px;font-size:15px;color:#444444;letter-spacing:0.610px;">Créer et partager</span>
<span class="t" style="left:1650.50px;top:169.90px;font-size:15px;color:#444444;letter-spacing:0.584px;">un PDF Adobe</span>
<span class="t" style="left:1654.70px;top:200.53px;font-size:14.5px;color:#444444;letter-spacing:-0.070px;">Adobe Acrobat</span>
<svg style="left:1803px;top:96px;" width="30" height="44" viewBox="0 0 30 44"><rect x="7.6" y="1.2" width="13.8" height="27.6" rx="6.9" fill="#4aa9e8" stroke="#1e8bcd" stroke-width="1.5"/><path d="M2.3 20.5 Q2.6 33 14.5 33.3 Q26.4 33 26.7 20.5 M14.5 33.3 V42" fill="none" stroke="#3b3a39" stroke-width="1.6"/></svg>
<span class="t" style="left:1792.00px;top:148.30px;font-size:15px;color:#444444;letter-spacing:0.669px;">Dictate</span>
<svg style="left:1813.3px;top:173.8px;" width="7" height="4" viewBox="0 0 7 4"><path d="M0.3 0.3 L3.5 3.6 L6.7 0.3" fill="none" stroke="#444444" stroke-width="1.4" stroke-linecap="round" stroke-linejoin="round"/></svg>
<span class="t" style="left:1800.30px;top:200.53px;font-size:14.5px;color:#444444;letter-spacing:-0.546px;">Voice</span>
<svg style="left:1874px;top:95px;" width="44" height="40" viewBox="0 0 44 40"><rect x="10.5" y="9" width="30.5" height="28" fill="none" stroke="#3b3a39" stroke-width="1.7"/><rect x="14" y="12.5" width="23.5" height="21" fill="#fafafa" stroke="#8a8886" stroke-width="1.2"/><path d="M14 17.8 H37.5 M30.5 17.8 V33.5" stroke="#8a8886" stroke-width="1.2"/><path d="M8.5 1 H17 L12.5 9.5 H18 L4.5 27.5 L8.5 15 H2.5Z" fill="#fbb040" stroke="#f07d13" stroke-width="1.4" stroke-linejoin="round"/></svg>
<span class="t" style="left:1871.60px;top:148.30px;font-size:15px;color:#444444;letter-spacing:0.659px;">Design</span>
<span class="t" style="left:1878.00px;top:169.90px;font-size:15px;color:#444444;letter-spacing:0.024px;">Ideas</span>
<span class="t" style="left:1868.80px;top:200.53px;font-size:14.5px;color:#444444;letter-spacing:-0.362px;">Designer</span>
<svg style="left:2023px;top:206.5px;" width="14" height="8" viewBox="0 0 14 8"><path d="M0.8 7.3 L7 1 L13.2 7.3" fill="none" stroke="#3b3a39" stroke-width="1.5"/></svg>
<svg style="left:735px;top:236px;" width="24" height="20" viewBox="0 0 24 20"><g fill="#f3f2f1" stroke="#a3a19f" stroke-width="1.2"><rect x="1" y="5" width="4.5" height="10"/><rect x="9" y="1" width="5.5" height="18"/><rect x="18" y="6" width="3.5" height="8"/></g><path d="M5.5 10 H9 M14.5 10 H18" stroke="#a3a19f" stroke-width="1"/></svg>
<div style="left:773px;top:229px;width:84px;height:29px;background:#e3e1df;box-shadow:0 0 0 1px #c8c6c4 inset;"></div>
<svg style="left:844px;top:243px;" width="7" height="4" viewBox="0 0 7 4"><path d="M0.3 0.3 L3.5 3.6 L6.7 0.3" fill="none" stroke="#a3a19f" stroke-width="1.4" stroke-linecap="round" stroke-linejoin="round"/></svg>
<svg style="left:872px;top:234px;" width="23" height="23" viewBox="0 0 23 23"><path d="M5.5 11.5 L11.5 5.2 L17.8 11.3 L11 17.3Z" fill="#f3f2f1" stroke="#a3a19f" stroke-width="1.3" stroke-linejoin="round"/><path d="M10.3 6.2 V2.6 Q10.5 0.9 12 0.9 Q13.6 0.9 13.7 2.6 V7" fill="none" stroke="#a3a19f" stroke-width="1.2"/><path d="M17.5 7.8 Q20.3 8.4 20 13.2" fill="none" stroke="#a3a19f" stroke-width="1.2"/><rect x="0.6" y="18" width="21.6" height="4.4" fill="#b3b0ad"/></svg>
<svg style="left:903px;top:243px;" width="7" height="4" viewBox="0 0 7 4"><path d="M0.3 0.3 L3.5 3.6 L6.7 0.3" fill="none" stroke="#a3a19f" stroke-width="1.4" stroke-linecap="round" stroke-linejoin="round"/></svg>
<svg style="left:921px;top:237px;" width="23" height="18" viewBox="0 0 23 18"><path d="M6.5 1 H19 Q21.7 1.2 20.8 3.5 L17.5 10.5 Q16.5 12 14.5 12 H2.5 Q0.2 11.7 1.2 9.5 L4.3 2.6 Q5 1 6.5 1Z" fill="#ebebeb" stroke="#a3a19f" stroke-width="1.3"/><path d="M1.2 10.3 V13.8 Q1.3 16 3.5 16.2 H14.5 Q16.7 16 17.5 14.3 L21 6.6 V3" fill="#c2c0be" stroke="#a3a19f" stroke-width="1.2"/></svg>
<svg style="left:953.7px;top:243px;" width="7" height="4" viewBox="0 0 7 4"><path d="M0.3 0.3 L3.5 3.6 L6.7 0.3" fill="none" stroke="#a3a19f" stroke-width="1.4" stroke-linecap="round" stroke-linejoin="round"/></svg>
<svg style="left:982px;top:240px;" width="11" height="10" viewBox="0 0 11 10"><path d="M0.5 1 H10.5" stroke="#333" stroke-width="1.4"/><path d="M1.2 4.3 L5.5 8.8 L9.8 4.3Z" fill="none" stroke="#333" stroke-width="1.4" stroke-linejoin="round"/></svg>
<span class="t" style="left:611.69px;top:347.54px;font-size:40px;color:#555555;">Busine</span>
<span class="t" style="left:737.30px;top:347.54px;font-size:40px;color:#555555;transform:scaleX(1.0170);transform-origin:0 0;">ss overview</span>
<div style="left:593px;top:409px;width:147px;height:2px;background:#fc4349;"></div>
<svg style="left:1829.5px;top:343px;" width="26" height="26" viewBox="0 0 26 26"><rect width="26" height="26" fill="#fc4349"/><path d="M15.5 3.5 L14.2 10.2 L21.5 11.5 L10.5 22.5 L11.8 15.8 L4.5 14.5Z" fill="#fff"/></svg>
<div style="left:756px;top:460.5px;width:878px;height:62.5px;background:#fc4349;"></div>
<div style="left:1182.4px;top:460.5px;width:1.2px;height:62.5px;background:#ff8a8d;"></div>
<div style="left:1336.9px;top:460.5px;width:1.2px;height:62.5px;background:#ff8a8d;"></div>
<div style="left:1488.9px;top:460.5px;width:1.2px;height:62.5px;background:#ff8a8d;"></div>
<span class="t" style="left:779.30px;top:481.26px;font-size:24.5px;color:#fff;transform:scaleX(1.0678);transform-origin:0 0;-webkit-text-stroke:1px #fff;">Sales per year</span>
<span class="t" style="left:1255.10px;top:480.86px;font-size:24.5px;color:#fff;transform:scaleX(1.0547);transform-origin:0 0;-webkit-text-stroke:1px #fff;">2018</span>
<span class="t" style="left:1407.80px;top:480.86px;font-size:24.5px;color:#fff;transform:scaleX(1.0639);transform-origin:0 0;-webkit-text-stroke:1px #fff;">2019</span>
<span class="t" style="left:1554.20px;top:480.86px;font-size:24.5px;color:#fff;transform:scaleX(1.1373);transform-origin:0 0;-webkit-text-stroke:1px #fff;">2020</span>
<span class="t" style="left:779.30px;top:534.38px;font-size:22px;color:#2a2a2a;">Client A</span>
<span class="t" style="left:779.30px;top:572.38px;font-size:22px;color:#2a2a2a;">Client B</span>
<span class="t" style="left:1280.28px;top:534.38px;font-size:22px;color:#2a2a2a;">300</span>
<span class="t" style="left:1280.28px;top:572.38px;font-size:22px;color:#2a2a2a;">350</span>
<span class="t" style="left:1432.50px;top:534.38px;font-size:22px;color:#2a2a2a;transform:scaleX(0.9940);transform-origin:0 0;">200</span>
<span class="t" style="left:1583.00px;top:534.38px;font-size:22px;color:#2a2a2a;transform:scaleX(0.9123);transform-origin:0 0;">100</span>
<span class="t" style="left:1432.50px;top:572.38px;font-size:22px;color:#2a2a2a;transform:scaleX(0.9940);transform-origin:0 0;">250</span>
<span class="t" style="left:1593.00px;top:572.38px;font-size:22px;color:#2a2a2a;transform:scaleX(0.9598);transform-origin:0 0;">50</span>
<div style="left:756px;top:609px;width:878px;height:42.5px;background:#ffd9da;"></div>
<div style="left:1182.4px;top:609px;width:1.2px;height:42.5px;background:#ffecec;"></div>
<div style="left:1336.9px;top:609px;width:1.2px;height:42.5px;background:#ffecec;"></div>
<div style="left:1488.9px;top:609px;width:1.2px;height:42.5px;background:#ffecec;"></div>
<span class="t" style="left:779.30px;top:618.26px;font-size:24.5px;color:#222;transform:scaleX(1.0678);transform-origin:0 0;-webkit-text-stroke:1px #222;">Sales per year</span>
<span class="t" style="left:1271.50px;top:618.26px;font-size:24.5px;color:#222;transform:scaleX(1.1250);transform-origin:0 0;-webkit-text-stroke:1px #222;">650</span>
<span class="t" style="left:1424.00px;top:618.26px;font-size:24.5px;color:#222;transform:scaleX(1.1494);transform-origin:0 0;-webkit-text-stroke:1px #222;">450</span>
<span class="t" style="left:1573.50px;top:618.26px;font-size:24.5px;color:#222;transform:scaleX(1.0638);transform-origin:0 0;-webkit-text-stroke:1px #222;">150</span>
<span class="t" style="left:763.50px;top:721.44px;font-size:33.5px;color:#2a2a2a;transform:scaleX(1.0474);transform-origin:0 0;-webkit-text-stroke:1.35px #2a2a2a;">Sales growth was</span>
<span class="t" style="left:1047.70px;top:721.44px;font-size:33.5px;color:#0a78f0;transform:scaleX(0.9439);transform-origin:0 0;-webkit-text-stroke:1.35px #0a78f0;">75%</span>
<span class="t" style="left:1121.50px;top:721.44px;font-size:33.5px;color:#2a2a2a;transform:scaleX(1.0736);transform-origin:0 0;-webkit-text-stroke:1.35px #2a2a2a;">in 2020</span>
<span class="t" style="left:1123.80px;top:817.04px;font-size:28.3px;color:#f0484c;transform:scaleX(1.0207);transform-origin:0 0;">Business overview</span>
<svg style="left:980px;top:860px;" width="500" height="200" viewBox="0 0 500 200"><path d="M104.80 10.00 A89.8 89.8 0 0 1 171.85 159.54 L144.67 135.32 A53.4 53.4 0 0 0 104.80 46.40Z" fill="#fc4349"/><path d="M171.85 159.54 A89.8 89.8 0 0 1 16.21 114.47 L52.12 108.52 A53.4 53.4 0 0 0 144.67 135.32Z" fill="#ff8d8d"/><path d="M16.21 114.47 A89.8 89.8 0 0 1 104.80 10.00 L104.80 46.40 A53.4 53.4 0 0 0 52.12 108.52Z" fill="#8b0a22"/><path d="M308.28 121.98 A89.8 89.8 0 0 1 435.23 19.37 L419.04 51.97 A53.4 53.4 0 0 0 343.55 112.99Z" fill="#fc4349"/><path d="M435.23 19.37 A89.8 89.8 0 0 1 431.68 181.90 L416.93 148.62 A53.4 53.4 0 0 0 419.04 51.97Z" fill="#ff8d8d"/><path d="M431.68 181.90 A89.8 89.8 0 0 1 308.28 121.98 L343.55 112.99 A53.4 53.4 0 0 0 416.93 148.62Z" fill="#8b0a22"/></svg>
<div style="left:1030.6000000000001px;top:1110.2px;width:16.6px;height:16.6px;background:#fc4349;border-radius:50%;"></div>
<span class="t" style="left:1063.80px;top:1111.33px;font-size:16.5px;color:#222;letter-spacing:0.246px;">Client A</span>
<div style="left:1205.9px;top:1110.2px;width:16.6px;height:16.6px;background:#ff8d8d;border-radius:50%;"></div>
<span class="t" style="left:1238.60px;top:1111.33px;font-size:16.5px;color:#222;letter-spacing:0.117px;">Client B</span>
<div style="left:1386.5px;top:1110.2px;width:16.6px;height:16.6px;background:#8b0a22;border-radius:50%;"></div>
<span class="t" style="left:1418.80px;top:1111.33px;font-size:16.5px;color:#222;letter-spacing:0.188px;">Client C</span>
<span class="t" style="left:1830.80px;top:1187.35px;font-size:20.5px;color:#e23a3f;">2</span>
<div style="left:44.2px;top:480px;width:325.6px;height:294.2px;background:#8b0809;box-shadow:0 0 0 1.2px #fafafa;"></div>
<div style="left:49px;top:484px;width:316.5px;height:285.5px;background:#ffffff;"></div>
<div style="left:97.7px;top:619px;width:206px;height:10.4px;background:#ffd9da;"></div>
<span class="t" style="left:98.40px;top:645.27px;font-size:8.9px;color:#222;letter-spacing:-0.271px;-webkit-text-stroke:0.2px #222;">Sales growth was</span>
<span class="t" style="left:166.30px;top:645.27px;font-size:8.9px;color:#0a78f0;letter-spacing:-1.483px;-webkit-text-stroke:0.2px #0a78f0;">75%</span>
<span class="t" style="left:183.50px;top:645.27px;font-size:8.9px;color:#222;letter-spacing:-0.304px;-webkit-text-stroke:0.2px #222;">in 2020</span>
<span class="t" style="left:182.60px;top:668.71px;font-size:6.6px;color:#f0484c;letter-spacing:0.131px;">Business overview</span>
<svg style="left:140px;top:675px;" width="140" height="56" viewBox="0 0 140 56"><path d="M34.00 5.90 A21.6 21.6 0 0 1 50.13 41.87 L43.56 36.01 A12.8 12.8 0 0 0 34.00 14.70Z" fill="#fc4349"/><path d="M50.13 41.87 A21.6 21.6 0 0 1 12.69 31.03 L21.37 29.59 A12.8 12.8 0 0 0 43.56 36.01Z" fill="#ff8d8d"/><path d="M12.69 31.03 A21.6 21.6 0 0 1 34.00 5.90 L34.00 14.70 A12.8 12.8 0 0 0 21.37 29.59Z" fill="#8b0a22"/><path d="M81.57 32.84 A21.6 21.6 0 0 1 112.10 8.15 L108.19 16.03 A12.8 12.8 0 0 0 90.10 30.66Z" fill="#fc4349"/><path d="M112.10 8.15 A21.6 21.6 0 0 1 111.25 47.25 L107.69 39.20 A12.8 12.8 0 0 0 108.19 16.03Z" fill="#ff8d8d"/><path d="M111.25 47.25 A21.6 21.6 0 0 1 81.57 32.84 L90.10 30.66 A12.8 12.8 0 0 0 107.69 39.20Z" fill="#8b0a22"/></svg>
<div style="left:161.4px;top:738px;width:4px;height:4px;background:#fc4349;border-radius:50%;"></div>
<span class="t" style="left:168.90px;top:738.01px;font-size:4px;color:#333;letter-spacing:0.100px;">Client A</span>
<div style="left:203px;top:738px;width:4px;height:4px;background:#ff8d8d;border-radius:50%;"></div>
<span class="t" style="left:210.50px;top:738.01px;font-size:4px;color:#333;letter-spacing:0.069px;">Client B</span>
<div style="left:245.4px;top:738px;width:4px;height:4px;background:#8b0a22;border-radius:50%;"></div>
<span class="t" style="left:252.90px;top:738.01px;font-size:4px;color:#333;letter-spacing:0.038px;">Client C</span>
<span class="t" style="left:349.30px;top:755.74px;font-size:4.8px;color:#e23a3f;">2</span>
<span class="t" style="left:17.30px;top:794.32px;font-size:19px;color:#666;">3</span>
<div style="left:49px;top:798px;width:316px;height:224px;background:#ffffff;box-shadow:0 0 0 1px #cdcdcd;"></div>
<span class="t" style="left:64.40px;top:810.37px;font-size:9.6px;color:#444;letter-spacing:-0.010px;">Analysis per country</span>
<div style="left:64.4px;top:824.4px;width:29.2px;height:1px;background:#fc4349;"></div>
<svg style="left:349px;top:808.6px;" width="7" height="7" viewBox="0 0 7 7"><rect width="7" height="7" fill="#fc4349"/><path d="M4.2 1 L3.8 2.9 L5.8 3.2 L2.8 6 L3.2 4.1 L1.2 3.8Z" fill="#fff"/></svg>
<div style="left:70.2px;top:839.3px;width:141.3px;height:8.8px;background:#fb6c70;"></div>
<span class="t" style="left:71.30px;top:841.01px;font-size:6.6px;color:#ffecec;letter-spacing:-0.080px;">Analysis</span>
<div style="left:71.8px;top:854.6px;width:137px;height:1.6px;background:#d6d6d6;"></div>
<div style="left:71.8px;top:859.9px;width:129px;height:1.6px;background:#d6d6d6;"></div>
<div style="left:71.8px;top:865.2px;width:34px;height:1.6px;background:#d6d6d6;"></div>
<div style="left:71.8px;top:870.5px;width:138px;height:1.6px;background:#d6d6d6;"></div>
<div style="left:71.8px;top:875.8000000000001px;width:134px;height:1.6px;background:#d6d6d6;"></div>
<div style="left:71.8px;top:881.1px;width:135px;height:1.6px;background:#d6d6d6;"></div>
<div style="left:71.8px;top:886.4px;width:41px;height:1.6px;background:#d6d6d6;"></div>
<div style="left:71.8px;top:891.7px;width:127px;height:1.6px;background:#d6d6d6;"></div>
<div style="left:71.8px;top:897.0px;width:128px;height:1.6px;background:#d6d6d6;"></div>
<div style="left:71.8px;top:902.3000000000001px;width:130px;height:1.6px;background:#d6d6d6;"></div>
<span class="t" style="left:272.30px;top:837.30px;font-size:6.5px;color:#333;letter-spacing:-0.055px;">Per country</span>
<div style="left:259.5px;top:848.7px;width:1.6px;height:1.6px;background:#fc4349;border-radius:50%;"></div>
<div style="left:262.5px;top:849.1px;width:14px;height:0.9px;background:#cfcfcf;"></div>
<div style="left:280.5px;top:848.7px;width:1.6px;height:1.6px;background:#8b0a22;border-radius:50%;"></div>
<div style="left:283.5px;top:849.1px;width:14px;height:0.9px;background:#cfcfcf;"></div>
<div style="left:301.5px;top:848.7px;width:1.6px;height:1.6px;background:#fc4349;border-radius:50%;"></div>
<div style="left:304.5px;top:849.1px;width:14px;height:0.9px;background:#cfcfcf;"></div>
<svg style="left:250px;top:855px;" width="80" height="80" viewBox="0 0 80 80"><path d="M39.30 3.60 A35.2 35.2 0 0 1 64.62 63.25 L53.61 52.62 A19.9 19.9 0 0 0 39.30 18.90Z" fill="#fc4349"/><path d="M64.62 63.25 A35.2 35.2 0 0 1 4.44 43.70 L19.59 41.57 A19.9 19.9 0 0 0 53.61 52.62Z" fill="#ff8d8d"/><path d="M4.44 43.70 A35.2 35.2 0 0 1 39.30 3.60 L39.30 18.90 A19.9 19.9 0 0 0 19.59 41.57Z" fill="#8b0a22"/></svg>
<div style="left:73.7px;top:949.8px;width:6.3999999999999915px;height:16.100000000000023px;background:#fc5257;"></div>
<div style="left:80.1px;top:933.2px;width:7.400000000000006px;height:32.69999999999993px;background:#8b0a22;"></div>
<div style="left:102.5px;top:947.3px;width:7.400000000000006px;height:18.600000000000023px;background:#fc5257;"></div>
<div style="left:109.9px;top:929px;width:7.699999999999989px;height:36.89999999999998px;background:#8b0a22;"></div>
<div style="left:132.3px;top:942.5px;width:7.399999999999977px;height:23.399999999999977px;background:#fc5257;"></div>
<div style="left:139.7px;top:923.6px;width:7.0px;height:42.299999999999955px;background:#8b0a22;"></div>
<div style="left:154.8px;top:922px;width:7.0px;height:30.399999999999977px;background:#ffa3a3;"></div>
<div style="left:154.8px;top:952.4px;width:7.0px;height:13.5px;background:#8b0a22;"></div>
<div style="left:166.6px;top:922px;width:7.099999999999994px;height:22px;background:#ffa3a3;"></div>
<div style="left:166.6px;top:944px;width:7.099999999999994px;height:21.899999999999977px;background:#8b0a22;"></div>
<div style="left:178.5px;top:922px;width:7.300000000000011px;height:16px;background:#ffa3a3;"></div>
<div style="left:178.5px;top:938px;width:7.300000000000011px;height:27.899999999999977px;background:#8b0a22;"></div>
<div style="left:190.3px;top:922px;width:7.399999999999977px;height:15px;background:#ffa3a3;"></div>
<div style="left:190.3px;top:937px;width:7.399999999999977px;height:28.899999999999977px;background:#8b0a22;"></div>
<div style="left:202.2px;top:922px;width:7.300000000000011px;height:10.200000000000045px;background:#ffa3a3;"></div>
<div style="left:202.2px;top:932.2px;width:7.300000000000011px;height:33.69999999999993px;background:#8b0a22;"></div>
<div style="left:214px;top:922px;width:7.400000000000006px;height:9.200000000000045px;background:#ffa3a3;"></div>
<div style="left:214px;top:931.2px;width:7.400000000000006px;height:34.69999999999993px;background:#8b0a22;"></div>
<div style="left:77px;top:969.2px;width:6px;height:0.9px;background:#a8a8a8;"></div>
<div style="left:106.5px;top:969.2px;width:6px;height:0.9px;background:#a8a8a8;"></div>
<div style="left:136px;top:969.2px;width:6px;height:0.9px;background:#a8a8a8;"></div>
<div style="left:156.5px;top:969.2px;width:6px;height:0.9px;background:#a8a8a8;"></div>
<div style="left:168.3px;top:969.2px;width:6px;height:0.9px;background:#a8a8a8;"></div>
<div style="left:180.3px;top:969.2px;width:6px;height:0.9px;background:#a8a8a8;"></div>
<div style="left:192.2px;top:969.2px;width:6px;height:0.9px;background:#a8a8a8;"></div>
<div style="left:204px;top:969.2px;width:6px;height:0.9px;background:#a8a8a8;"></div>
<div style="left:216px;top:969.2px;width:6px;height:0.9px;background:#a8a8a8;"></div>
<span class="t" style="left:349.30px;top:1007.24px;font-size:4.8px;color:#e23a3f;">3</span>
<span class="t" style="left:16.80px;top:1046.32px;font-size:19px;color:#666;">4</span>
<div style="left:49.5px;top:1050.8px;width:315.3px;height:222.2px;background:#ffffff;box-shadow:0 0 0 1px #cdcdcd;"></div>
<span class="t" style="left:64.20px;top:1062.93px;font-size:8px;color:#444;letter-spacing:0.539px;">EBITDA</span>
<div style="left:64.2px;top:1076px;width:29.2px;height:1px;background:#fc4349;"></div>
<svg style="left:349px;top:1059.4px;" width="7" height="7" viewBox="0 0 7 7"><rect width="7" height="7" fill="#fc4349"/><path d="M4.2 1 L3.8 2.9 L5.8 3.2 L2.8 6 L3.2 4.1 L1.2 3.8Z" fill="#fff"/></svg>
<div style="left:111px;top:1106.6px;width:0.8px;height:106px;background:#c9c9c9;"></div>
<div style="left:156.2px;top:1106.6px;width:0.8px;height:105.2px;background:#e0e0e0;"></div>
<div style="left:201.5px;top:1106.6px;width:0.8px;height:105.2px;background:#e0e0e0;"></div>
<div style="left:246.3px;top:1106.6px;width:0.8px;height:105.2px;background:#e0e0e0;"></div>
<div style="left:291.2px;top:1106.6px;width:0.8px;height:105.2px;background:#e0e0e0;"></div>
<div style="left:335.8px;top:1106.6px;width:0.8px;height:105.2px;background:#e0e0e0;"></div>
<div style="left:109.3px;top:1127.6px;width:2px;height:0.8px;background:#c9c9c9;"></div>
<div style="left:109.3px;top:1148.7px;width:2px;height:0.8px;background:#c9c9c9;"></div>
<div style="left:109.3px;top:1169.5px;width:2px;height:0.8px;background:#c9c9c9;"></div>
<div style="left:109.3px;top:1190.7px;width:2px;height:0.8px;background:#c9c9c9;"></div>
<div style="left:109.3px;top:1211.8px;width:2px;height:0.8px;background:#c9c9c9;"></div>
<div style="left:111.6px;top:1112.8999999999999px;width:35.400000000000006px;height:8.4px;background:#fc4349;"></div>
<div style="left:147px;top:1112.8999999999999px;width:55px;height:8.4px;background:#ff8f84;"></div>
<div style="left:202px;top:1112.8999999999999px;width:81px;height:8.4px;background:#b5121f;"></div>
<span class="t" style="left:70.55px;top:1113.75px;font-size:6.2px;color:#333;letter-spacing:-0.102px;">Net revenue</span>
<div style="left:111.6px;top:1134.0px;width:58.400000000000006px;height:8.4px;background:#fc4349;"></div>
<div style="left:170px;top:1134.0px;width:7px;height:8.4px;background:#ff8f84;"></div>
<div style="left:177px;top:1134.0px;width:98px;height:8.4px;background:#b5121f;"></div>
<span class="t" style="left:68.80px;top:1134.85px;font-size:6.2px;color:#333;letter-spacing:0.034px;">Cost of goods</span>
<div style="left:111.6px;top:1155.0px;width:23.400000000000006px;height:8.4px;background:#fc4349;"></div>
<div style="left:135px;top:1155.0px;width:66px;height:8.4px;background:#ff8f84;"></div>
<div style="left:201px;top:1155.0px;width:112px;height:8.4px;background:#b5121f;"></div>
<span class="t" style="left:64.20px;top:1155.85px;font-size:6.2px;color:#333;letter-spacing:0.200px;">Operating exp.</span>
<div style="left:111.6px;top:1175.6px;width:56.400000000000006px;height:8.4px;background:#fc4349;"></div>
<div style="left:168px;top:1175.6px;width:66px;height:8.4px;background:#ff8f84;"></div>
<div style="left:234px;top:1175.6px;width:85px;height:8.4px;background:#b5121f;"></div>
<span class="t" style="left:68.85px;top:1176.45px;font-size:6.2px;color:#333;">Other income</span>
<div style="left:111.6px;top:1197.5px;width:63.400000000000006px;height:8.4px;background:#fc4349;"></div>
<div style="left:175px;top:1197.5px;width:69px;height:8.4px;background:#ff8f84;"></div>
<div style="left:244px;top:1197.5px;width:80px;height:8.4px;background:#b5121f;"></div>
<span class="t" style="left:64.20px;top:1198.35px;font-size:6.2px;color:#333;letter-spacing:-0.066px;">Revenue growth</span>
<span class="t" style="left:109.90px;top:1217.61px;font-size:6.6px;color:#444;">-</span>
<span class="t" style="left:152.91px;top:1217.61px;font-size:6.6px;color:#444;">5,0</span>
<span class="t" style="left:196.08px;top:1217.61px;font-size:6.6px;color:#444;">10,0</span>
<span class="t" style="left:241.38px;top:1217.61px;font-size:6.6px;color:#444;">15,0</span>
<span class="t" style="left:285.58px;top:1217.61px;font-size:6.6px;color:#444;">20,0</span>
<span class="t" style="left:330.38px;top:1217.61px;font-size:6.6px;color:#444;">25,0</span>
<div style="left:159px;top:1234.8px;width:3.6px;height:3.6px;background:#fc4349;"></div>
<span class="t" style="left:165.30px;top:1233.75px;font-size:6.2px;color:#333;letter-spacing:-0.389px;">2019</span>
<div style="left:186.3px;top:1234.8px;width:3.6px;height:3.6px;background:#ff8f84;"></div>
<span class="t" style="left:192.60px;top:1233.75px;font-size:6.2px;color:#333;letter-spacing:-0.389px;">2020</span>
<div style="left:214.3px;top:1234.8px;width:3.6px;height:3.6px;background:#b5121f;"></div>
<span class="t" style="left:220.60px;top:1233.75px;font-size:6.2px;color:#333;letter-spacing:-0.389px;">2021</span>
<span class="t" style="left:350.20px;top:1259.44px;font-size:4.8px;color:#e23a3f;">4</span>
<span class="t" style="left:10.50px;top:1289.77px;font-size:14.8px;color:#444444;letter-spacing:-0.277px;">Slide 2 of 5</span>
<svg style="left:105px;top:1287px;" width="22" height="20" viewBox="0 0 22 20"><path d="M12 17 H2 V1.5 H12.8 L16 4.8 V9" fill="none" stroke="#3b3a39" stroke-width="1.4"/><path d="M5 5.5 H9 M5 9 H9.5" stroke="#3b3a39" stroke-width="1.2"/><path d="M11 10.5 L19.5 19 M19.5 10.5 L11 19" stroke="#3b3a39" stroke-width="1.5"/></svg>
<span class="t" style="left:150.00px;top:1289.77px;font-size:14.8px;color:#444444;letter-spacing:-0.791px;">French (France)</span>
<svg style="left:1326px;top:1285px;" width="24" height="24" viewBox="0 0 24 24"><path d="M1 11 H23 M1 16 H23 M1 21 H23" stroke="#3b3a39" stroke-width="1.4"/><path d="M8 6.2 L12 2.4 L16 6.2" fill="none" stroke="#3b3a39" stroke-width="1.5"/></svg>
<span class="t" style="left:1351.50px;top:1290.27px;font-size:14.8px;color:#444444;letter-spacing:-0.589px;">Notes</span>
<svg style="left:1410px;top:1288px;" width="21" height="20" viewBox="0 0 21 20"><path d="M8 13 H1.2 V1.2 H18 V7" fill="none" stroke="#3b3a39" stroke-width="1.4"/><path d="M4.5 16.5 H8.5" stroke="#3b3a39" stroke-width="1.4"/><circle cx="14.3" cy="13.5" r="3.3" fill="none" stroke="#3b3a39" stroke-width="1.5"/><path d="M14.3 7.8 V9.7 M14.3 17.3 V19.2 M8.6 13.5 H10.5 M18.1 13.5 H20 M10.3 9.5 L11.6 10.8 M17 16.2 L18.3 17.5 M18.3 9.5 L17 10.8 M11.6 16.2 L10.3 17.5" stroke="#3b3a39" stroke-width="1.5"/></svg>
<span class="t" style="left:1434.30px;top:1290.27px;font-size:14.8px;color:#444444;letter-spacing:-0.426px;">Display Settings</span>
<div style="left:1559.3px;top:1281px;width:53.2px;height:30px;background:#c8c6c4;"></div>
<svg style="left:1576px;top:1288.3px;" width="21" height="17" viewBox="0 0 21 17"><rect x="0.8" y="0.8" width="18.6" height="14.8" fill="none" stroke="#3b3a39" stroke-width="1.5"/><path d="M4.6 0.8 V15.6" stroke="#3b3a39" stroke-width="1.3"/><rect x="8" y="4" width="8" height="4.6" fill="none" stroke="#3b3a39" stroke-width="1.2"/><path d="M4.6 11.8 H19.4" stroke="#3b3a39" stroke-width="1.2"/></svg>
<svg style="left:1630px;top:1288px;" width="21" height="18" viewBox="0 0 21 18"><g fill="none" stroke="#3b3a39" stroke-width="1.4"><rect x="0.8" y="0.8" width="7.6" height="5.6"/><rect x="12" y="0.8" width="7.6" height="5.6"/><rect x="0.8" y="10.6" width="7.6" height="5.6"/><rect x="12" y="10.6" width="7.6" height="5.6"/></g></svg>
<svg style="left:1684px;top:1287.5px;" width="20" height="18" viewBox="0 0 20 18"><path d="M9.8 2.6 Q5.5 0.2 1 1.6 V15.6 Q5.5 14.2 9.8 16.8 Q14 14.2 18.6 15.6 V1.6 Q14 0.2 9.8 2.6 V16.8" fill="none" stroke="#3b3a39" stroke-width="1.3"/><path d="M3.3 5 H7.3 M3.3 8 H7.3 M3.3 11 H7.3 M12.3 5 H16.3 M12.3 8 H16.3 M12.3 11 H16.3" stroke="#3b3a39" stroke-width="1.1"/></svg>
<svg style="left:1739px;top:1287px;" width="19" height="20" viewBox="0 0 19 20"><path d="M0.5 1.2 H18.5" stroke="#3b3a39" stroke-width="1.5"/><rect x="2.6" y="1.2" width="13.8" height="9.4" fill="none" stroke="#3b3a39" stroke-width="1.4"/><path d="M9.5 10.6 V18 M5 18.4 H14" stroke="#3b3a39" stroke-width="1.4"/></svg>
<div style="left:1785px;top:1296px;width:11px;height:1.3px;background:#5a5a5a;"></div>
<div style="left:1802.5px;top:1296.2px;width:136px;height:1px;background:#5a5a5a;"></div>
<div style="left:1870.6px;top:1291.5px;width:1px;height:10px;background:#5a5a5a;"></div>
<div style="left:1858.5px;top:1288.7px;width:6px;height:15.6px;background:#666;"></div>
<div style="left:1946.3px;top:1296px;width:10px;height:1.3px;background:#5a5a5a;"></div>
<div style="left:1950.6px;top:1291.6px;width:1.3px;height:10px;background:#5a5a5a;"></div>
<span class="t" style="left:1973.80px;top:1290.53px;font-size:14.5px;color:#444444;letter-spacing:-0.688px;">87 %</span>
<svg style="left:2021px;top:1286px;" width="22" height="22" viewBox="0 0 22 22"><rect x="6.5" y="6.5" width="8.6" height="8.6" rx="1" fill="none" stroke="#3b3a39" stroke-width="1.3"/><path d="M8.2 3.3 L10.8 0.8 L13.4 3.3 M8.2 18.3 L10.8 20.8 L13.4 18.3 M3.3 8.2 L0.8 10.8 L3.3 13.4 M18.3 8.2 L20.8 10.8 L18.3 13.4" fill="none" stroke="#3b3a39" stroke-width="1.3"/></svg>
<div style="left:9.8px;top:189.8px;width:725.5px;height:436px;background:#ffffff;border:3.2px solid #a6a6a6;border-bottom-width:4px;box-sizing:border-box;"></div>
<span class="t" style="left:44.00px;top:238.60px;font-size:56px;color:#1e1e1e;font-weight:700;transform:scaleX(0.9970);transform-origin:0 0;">Paste Options:</span>
<div style="left:302.4px;top:335px;width:141.8px;height:141.8px;background:#dfdfdf;"></div>
<div style="left:17.4px;top:476.8px;width:711.2px;height:4.5px;background:#e2e2e2;"></div>
<span class="t" style="left:191.40px;top:528.80px;font-size:56px;color:#262626;transform:scaleX(0.8729);transform-origin:0 0;">Paste</span>
<svg style="left:50.8px;top:353px;" width="100" height="112" viewBox="0 0 100 112"><rect x="2.25" y="17.05" width="71.5" height="85.5" fill="#f6f6f6" stroke="#f77a0b" stroke-width="4.5"/><rect x="6.4" y="21.2" width="63.2" height="77.2" fill="none" stroke="#fdd89b" stroke-width="3.8"/><path d="M17 30.9 V16.8 H25.6 V11 Q26.5 2 38 2 Q49.5 2 50.4 11 V16.8 H59.6 V30.9Z" fill="#f6f6f6" stroke="#7b7b7b" stroke-width="4" stroke-linejoin="miter"/><path d="M46 54 H60 V46.5 H84 V112 H38 V90.5 H46Z" fill="#fff"/><text x="51.5" y="89.2" font-family="Liberation Sans, sans-serif" font-size="71" fill="#333" textLength="29" lengthAdjust="spacingAndGlyphs">a</text><rect x="42.8" y="95.2" width="13.4" height="13.7" fill="#f8383d"/><rect x="62.099999999999994" y="95.2" width="13.4" height="13.7" fill="#f77a0b"/><rect x="81.4" y="95.2" width="13.4" height="13.7" fill="#0b82ce"/></svg>
<svg style="left:193px;top:353px;" width="100" height="112" viewBox="0 0 100 112"><rect x="2.25" y="17.05" width="71.5" height="85.5" fill="#f6f6f6" stroke="#f77a0b" stroke-width="4.5"/><rect x="6.4" y="21.2" width="63.2" height="77.2" fill="none" stroke="#fdd89b" stroke-width="3.8"/><path d="M17 30.9 V16.8 H25.6 V11 Q26.5 2 38 2 Q49.5 2 50.4 11 V16.8 H59.6 V30.9Z" fill="#f6f6f6" stroke="#7b7b7b" stroke-width="4" stroke-linejoin="miter"/><rect x="15" y="43.1" width="46.9" height="4.9" fill="#0b82ce"/><rect x="15" y="56.9" width="36.7" height="4.7" fill="#f8383d"/><rect x="15" y="71.6" width="17.5" height="4.1" fill="#f8383d"/><path d="M80 33.1 L34 74.8 Q27 86 -3 93 V112 H100 V33.1Z" fill="#ffffff"/><path d="M47.6 76.6 L87 40.9 L93 40 L93.2 45.6 L57.6 85.2" fill="#fbfbfb" stroke="#3a3a3a" stroke-width="4" stroke-linejoin="round" stroke-linecap="butt"/><path d="M33.5 81.5 Q39 76.3 46 77.6 Q53 79.5 56.2 86.5 Q58 94.5 54 100.5 Q48 107.5 36 107.6 Q18 107 6.5 100.6 Q21 98 27 92 Q30.5 86.5 33.5 81.5Z" fill="#0b6fc2" stroke="#0b6fc2" stroke-width="2.4" stroke-linejoin="round"/><path d="M38.5 86 Q43 82.5 47.5 84 Q52.5 87 52.3 93.5 Q51 101 43 103.2 Q34 104.3 28 102 Q34 97.5 38.5 86Z" fill="#4aa5e2"/></svg>
<svg style="left:335.3px;top:353px;" width="100" height="112" viewBox="0 0 100 112"><rect x="2.25" y="17.05" width="71.5" height="85.5" fill="#f6f6f6" stroke="#f77a0b" stroke-width="4.5"/><rect x="6.4" y="21.2" width="63.2" height="77.2" fill="none" stroke="#fdd89b" stroke-width="3.8"/><path d="M17 30.9 V16.8 H25.6 V11 Q26.5 2 38 2 Q49.5 2 50.4 11 V16.8 H59.6 V30.9Z" fill="#f6f6f6" stroke="#7b7b7b" stroke-width="4" stroke-linejoin="miter"/><path d="M-3 71 H22 V62 H26 V50 H38 V44.5 H80 V112 H-3Z" fill="#dfdfdf"/><text x="5.5" y="108.5" font-family="Liberation Sans, sans-serif" font-size="71" fill="#333" textLength="29" lengthAdjust="spacingAndGlyphs">a</text><g fill="none" stroke="#1389d4" stroke-width="4.8" stroke-linecap="butt"><path d="M47.5 73.2 H47 Q36 73.2 36 61.6 Q36 50 47 50 H61.5 Q72.8 50 72.8 61.6 V63.5 Q72.3 71.8 65.5 72.9 H61.2"/><path d="M80.8 63.9 H81.5 Q92.6 63.9 92.6 75.9 Q92.6 87.9 81.5 87.9 H66.8 Q55.7 87.9 55.7 75.9 Q55.7 63 67.5 62.2"/></g><rect x="42.9" y="95.2" width="13.4" height="13.7" fill="#f8383d"/><rect x="62.2" y="95.2" width="13.4" height="13.7" fill="#f77a0b"/><rect x="81.5" y="95.2" width="13.4" height="13.7" fill="#0b82ce"/></svg>
<svg style="left:477.7px;top:353px;" width="100" height="112" viewBox="0 0 100 112"><rect x="2.25" y="17.05" width="71.5" height="85.5" fill="#f6f6f6" stroke="#f77a0b" stroke-width="4.5"/><rect x="6.4" y="21.2" width="63.2" height="77.2" fill="none" stroke="#fdd89b" stroke-width="3.8"/><path d="M17 30.9 V16.8 H25.6 V11 Q26.5 2 38 2 Q49.5 2 50.4 11 V16.8 H59.6 V30.9Z" fill="#f6f6f6" stroke="#7b7b7b" stroke-width="4" stroke-linejoin="miter"/><g fill="none" stroke="#1389d4" stroke-width="4.6"><path d="M23.3 63.7 H21.5 Q12.7 62 12.7 52 Q12.7 40.7 25 40.7 H38 Q49.8 40.7 49.8 52 Q49.8 62 41 63.7 H38.4"/><path d="M43.2 53.6 Q31.2 53.4 31.2 62.5 V71.4"/></g><path d="M80 33.1 L34 74.8 Q27 86 -3 93 V112 H100 V33.1Z" fill="#ffffff"/><path d="M47.6 76.6 L87 40.9 L93 40 L93.2 45.6 L57.6 85.2" fill="#fbfbfb" stroke="#3a3a3a" stroke-width="4" stroke-linejoin="round" stroke-linecap="butt"/><path d="M33.5 81.5 Q39 76.3 46 77.6 Q53 79.5 56.2 86.5 Q58 94.5 54 100.5 Q48 107.5 36 107.6 Q18 107 6.5 100.6 Q21 98 27 92 Q30.5 86.5 33.5 81.5Z" fill="#0b6fc2" stroke="#0b6fc2" stroke-width="2.4" stroke-linejoin="round"/><path d="M38.5 86 Q43 82.5 47.5 84 Q52.5 87 52.3 93.5 Q51 101 43 103.2 Q34 104.3 28 102 Q34 97.5 38.5 86Z" fill="#4aa5e2"/></svg>
<svg style="left:620.2px;top:353px;" width="100" height="112" viewBox="0 0 100 112"><rect x="2.25" y="17.05" width="71.5" height="85.5" fill="#f6f6f6" stroke="#f77a0b" stroke-width="4.5"/><rect x="6.4" y="21.2" width="63.2" height="77.2" fill="none" stroke="#fdd89b" stroke-width="3.8"/><path d="M17 30.9 V16.8 H25.6 V11 Q26.5 2 38 2 Q49.5 2 50.4 11 V16.8 H59.6 V30.9Z" fill="#f6f6f6" stroke="#7b7b7b" stroke-width="4" stroke-linejoin="miter"/><path d="M19 51.7 H80 V112 H19Z" fill="#fff"/><rect x="26.3" y="58.9" width="66.3" height="47.6" fill="#f6f6f6" stroke="#3a3a3a" stroke-width="4.8"/><path d="M28.7 87 L44.5 71.5 L64.5 92 L75.2 83.5 L90.2 98.5 V104.1 H28.7Z" fill="#4aa5e2"/><path d="M28.7 87 L44.5 71.5 L64.5 92 L75.2 83.5 L90.2 98.5" fill="none" stroke="#0b6fc2" stroke-width="3.6"/><path d="M62 90 L77 104.1" fill="none" stroke="#0b6fc2" stroke-width="3.4"/><rect x="70.7" y="66.4" width="9" height="9" rx="2" fill="#f77a0b"/></svg>
<div style="left:302.3px;top:505.6px;width:1020.8px;height:120.2px;background:#ffffff;border:4.2px solid #a0a0a0;box-sizing:border-box;"></div>
<span class="t" style="left:323.50px;top:543.64px;font-size:54.3px;color:#666666;transform:scaleX(1.0386);transform-origin:0 0;">Use Destination Theme &amp; Link Data (L)</span>
</body></html>
